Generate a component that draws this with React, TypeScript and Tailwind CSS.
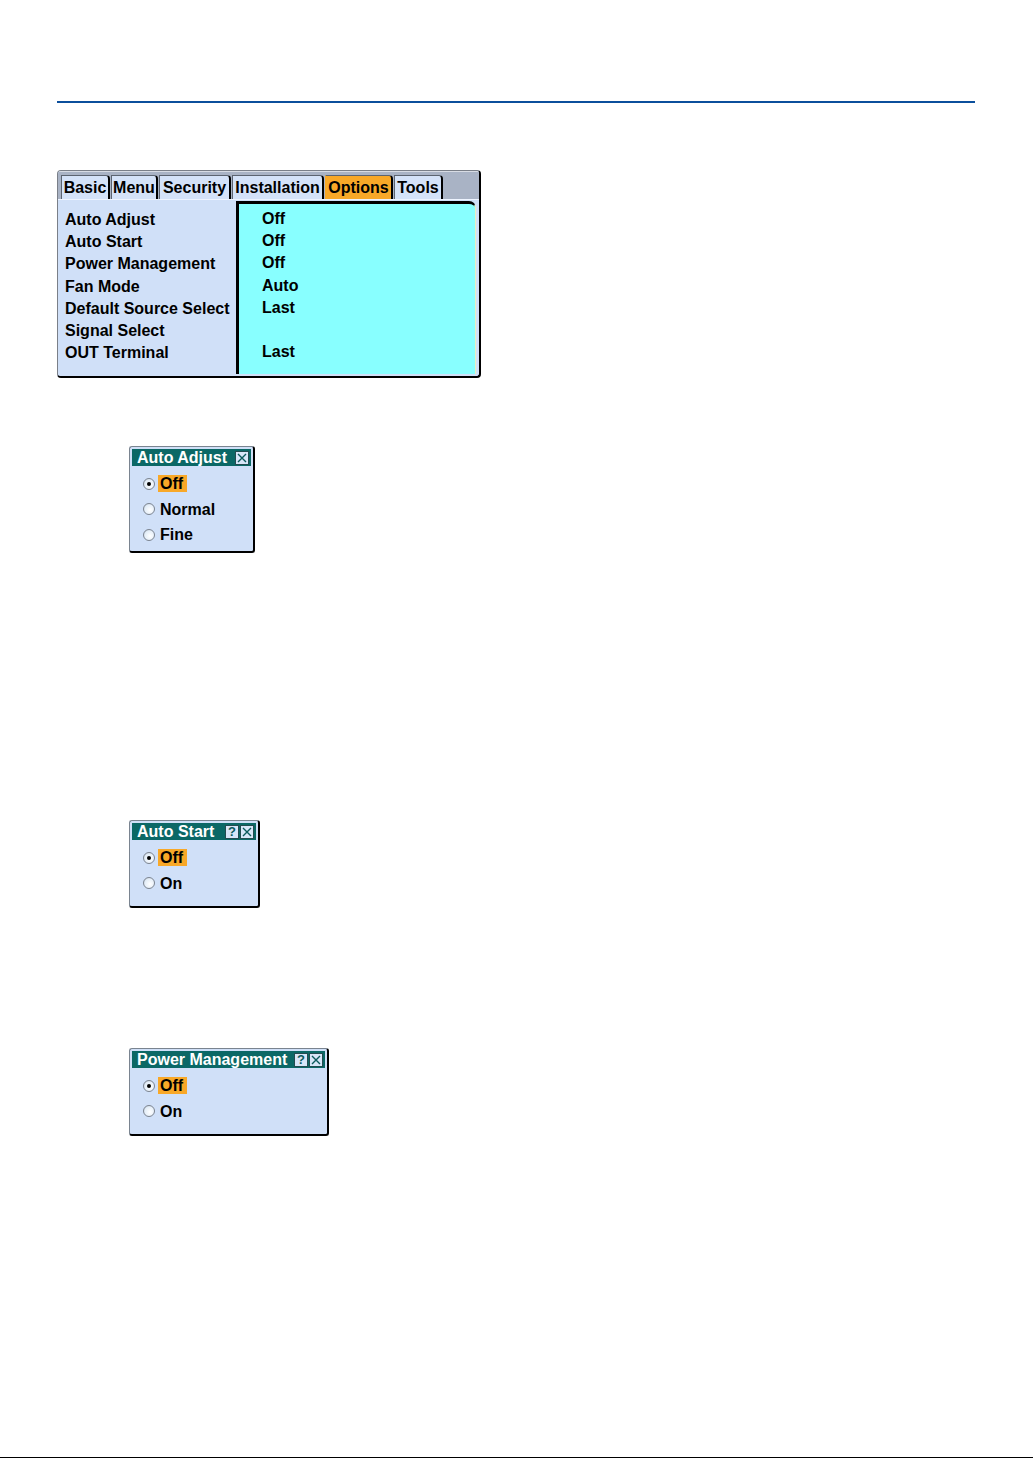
import React from 'react';

// projector OSD: "Options" page plus three of its pop-up dialogs

const tabs = [
  { label: 'Basic', w: 'w-[49px]' },
  { label: 'Menu', w: 'w-[47px]' },
  { label: 'Security', w: 'w-[72px]' },
  { label: 'Installation', w: 'w-[92px]' },
  { label: 'Options', w: 'w-[68px]', active: true },
  { label: 'Tools', w: 'w-[49px]' },
];

const rows = [
  ['Auto Adjust', 'Off'],
  ['Auto Start', 'Off'],
  ['Power Management', 'Off'],
  ['Fan Mode', 'Auto'],
  ['Default Source Select', 'Last'],
  ['Signal Select', ''],
  ['OUT Terminal', 'Last'],
];

function OptionsPanel() {
  return (
    <div className="ml-[57px] mt-[67px] w-[424px] h-[208px] rounded-[4px] border border-[#7a7f88] border-r-2 border-b-2 border-r-black border-b-black bg-[#d0e0f8] flex flex-col overflow-hidden">
      {/* tab strip */}
      <div className="h-[28px] bg-[#a9b3c5] flex items-end gap-[1px] pl-[3px] border-t border-[#d8dce4]">
        {tabs.map((t) => (
          <div
            key={t.label}
            className={`${t.w} h-[24px] flex items-center justify-center rounded-tr-[4px] border-l border-t border-[#5c6470] border-r-2 border-r-black text-[16px] font-bold leading-none ${
              t.active ? 'bg-[#f8a828] border-l-[#f8a828]' : 'bg-[#d4e2f8]'
            }`}
          >
            {t.label}
          </div>
        ))}
      </div>

      {/* body */}
      <div className="flex-1 flex border-t border-[#eef4ff]">
        <div className="w-[178px] pl-[7px] pt-[9px]">
          {rows.map(([label]) => (
            <div key={label} className="h-[22.2px] flex items-center text-[16px] font-bold whitespace-nowrap">
              {label}
            </div>
          ))}
        </div>
        <div className="w-[240px] mb-[2px] mt-[1px] border-l-[3px] border-t-[3px] border-black border-r border-r-[#e8f0c0] rounded-tr-[7px] bg-[#88ffff] pl-[23px] pt-[4px]">
          {rows.map(([label, value]) => (
            <div key={label} className="h-[22.2px] flex items-center text-[16px] font-bold">
              {value}
            </div>
          ))}
        </div>
      </div>
    </div>
  );
}

function TitleButton({ kind }: { kind: 'help' | 'close' }) {
  return (
    <div className="w-[14px] h-[14px] bg-[#d8e6f8] border border-[#234c50] flex items-center justify-center">
      {kind === 'close' ? (
        <svg width="10" height="10" viewBox="0 0 10 10">
          <path d="M1 1L9 9M9 1L1 9" stroke="#0c5a5c" strokeWidth="1.4" />
        </svg>
      ) : (
        <span className="text-[13px] font-bold leading-none text-[#0c5a5c]">?</span>
      )}
    </div>
  );
}

function Radio({ checked }: { checked?: boolean }) {
  return (
    <div className="w-[12px] h-[12px] rounded-full border border-[#7c8490] bg-[radial-gradient(circle_at_60%_60%,#ffffff,#e4eef8_60%,#b8c4d0)] flex items-center justify-center">
      {checked && <div className="w-[4px] h-[4px] rounded-full bg-black" />}
    </div>
  );
}

type DialogProps = {
  title: string;
  options: string[];
  help?: boolean;
  className: string;
};

function Dialog({ title, options, help, className }: DialogProps) {
  return (
    <div
      className={`ml-[129px] rounded-[3px] border border-[#7a8490] border-r-2 border-b-2 border-r-black border-b-black bg-[#d0e0f8] p-[2px] ${className}`}
    >
      <div className="h-[17px] bg-[#0b6866] flex items-center pl-[5px] pr-[2px] gap-[1px]">
        <span className="flex-1 text-white text-[16px] font-bold leading-none whitespace-nowrap">{title}</span>
        {help && <TitleButton kind="help" />}
        <TitleButton kind="close" />
      </div>
      <div className="pl-[11px] pt-[5px]">
        {options.map((o, i) => (
          <div key={o} className="h-[25.5px] flex items-center gap-[3px]">
            <Radio checked={i === 0} />
            <span
              className={`text-[16px] font-bold leading-[17px] pl-[2px] pr-[4px] ${i === 0 ? 'bg-[#f8a828]' : ''}`}
            >
              {o}
            </span>
          </div>
        ))}
      </div>
    </div>
  );
}

export default function App() {
  return (
    <div className="w-[1033px] h-[1459px] bg-white flex flex-col font-['Liberation_Sans',Arial,sans-serif] text-black">
      {/* header rule */}
      <div className="mt-[101px] ml-[57px] w-[918px] h-[2px] bg-[#0b4f9c]" />

      <OptionsPanel />

      <Dialog
        title="Auto Adjust"
        options={['Off', 'Normal', 'Fine']}
        className="mt-[68px] w-[126px] h-[107px]"
      />
      <Dialog
        title="Auto Start"
        options={['Off', 'On']}
        help
        className="mt-[267px] w-[131px] h-[88px]"
      />
      <Dialog
        title="Power Management"
        options={['Off', 'On']}
        help
        className="mt-[140px] w-[200px] h-[88px]"
      />

      {/* footer rule */}
      <div className="mt-auto mb-[1px] h-[1px] bg-black" />
    </div>
  );
}
